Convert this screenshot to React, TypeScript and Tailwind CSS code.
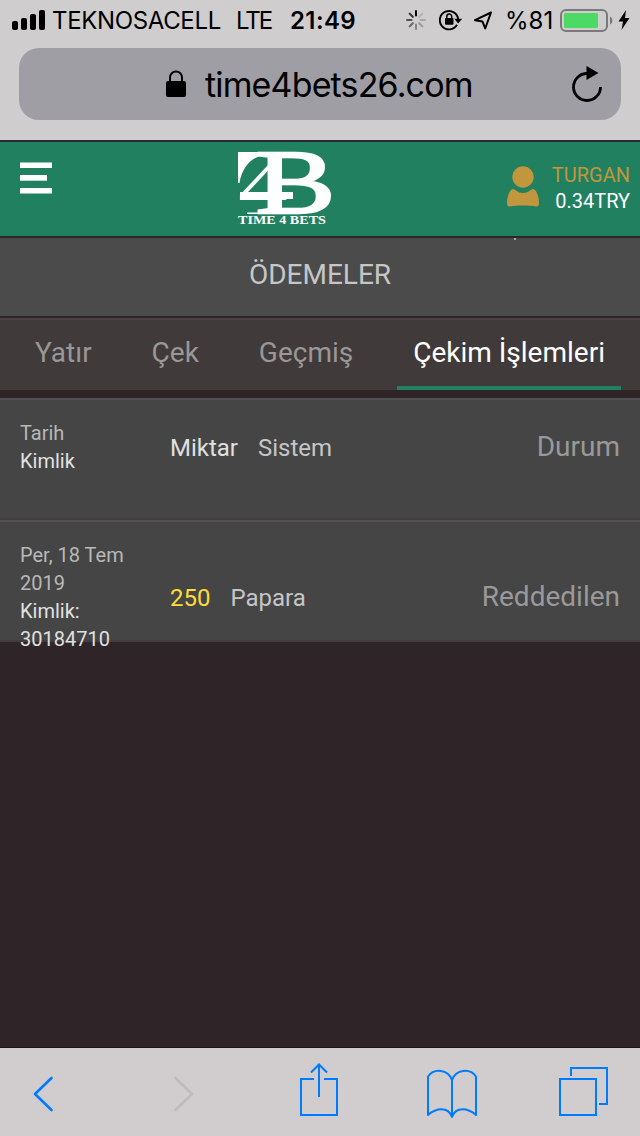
import type { ReactNode } from 'react'
import clsx from 'clsx'

const tabs = [
  { label: 'Yatır', active: false },
  { label: 'Çek', active: false },
  { label: 'Geçmiş', active: false },
  { label: 'Çekim İşlemleri', active: true },
]

const spokes = [1, 0.12, 0.18, 0.25, 0.35, 0.5, 0.6, 0.75]

function SignalIcon() {
  return (
    <svg width="34" height="20" viewBox="0 0 34 20" className="mt-[10px]">
      <rect x="0" y="11" width="6" height="9" rx="2" />
      <rect x="9" y="8" width="6" height="12" rx="2" />
      <rect x="18" y="4" width="6" height="16" rx="2" />
      <rect x="27" y="0" width="6" height="20" rx="2" />
    </svg>
  )
}

function SpinnerIcon() {
  return (
    <svg width="20" height="20" viewBox="0 0 20 20" className="mt-[10px]">
      {spokes.map((opacity, i) => (
        <line
          key={i}
          x1="10"
          y1="5.5"
          x2="10"
          y2="1"
          stroke="black"
          strokeWidth="2"
          strokeLinecap="round"
          opacity={opacity}
          transform={`rotate(${i * 45} 10 10)`}
        />
      ))}
    </svg>
  )
}

function RotationLockIcon() {
  return (
    <svg width="24" height="22" viewBox="0 0 24 22" className="mt-[9px]">
      <path d="M18 15.800A9.200 9.200 0 1 1 19.200 10.500" fill="none" stroke="black" strokeWidth="1.900" />
      <path d="M15.200 9.800h8l-4 4.700z" />
      <rect x="6" y="9" width="8.500" height="6.700" rx="1" />
      <path d="M7.800 10V7.400a2.450 2.450 0 0 1 4.900 0V10" fill="none" stroke="black" strokeWidth="1.500" />
    </svg>
  )
}

function LocationIcon() {
  return (
    <svg width="20" height="20" viewBox="0 0 20 20" className="mt-[11px]">
      <path d="M18 1.500 12.200 17.500 9.500 10.600 2 9.200z" fill="none" stroke="black" strokeWidth="2" strokeLinejoin="round" />
    </svg>
  )
}

function BatteryIcon() {
  return (
    <svg width="54" height="24" viewBox="0 0 54 24" className="mt-[8px]">
      <rect x="1" y="2" width="46" height="21" rx="5" fill="none" stroke="#7b797a" strokeWidth="2" />
      <rect x="4" y="5" width="34" height="15" rx="1.5" fill="#4cd964" />
      <path d="M50 8.500c3.200 1.200 3.200 6.800 0 8z" fill="#7b797a" />
    </svg>
  )
}

function LogoMark() {
  return (
    <svg width="94" height="76" viewBox="0 0 94 76" fill="white" className="mt-2 overflow-visible font-['Liberation_Serif',serif]">
      <path d="M2 2H46V3.500C22 1 7 12 3.500 33H2z" />
      <text transform="scale(1.31 1)">
        <tspan x="1.500" y="61" fontSize="76">4</tspan>
        <tspan x="15" y="63" fontSize="91" stroke="white" strokeWidth="2.400">B</tspan>
      </text>
      <rect x="32" y="2" width="13" height="62" />
      <rect x="4" y="42" width="53" height="7" />
      <rect x="11" y="62.500" width="45" height="1.500" />
      <text x="2" y="74" fontSize="12" fontWeight="700" textLength="88" lengthAdjust="spacingAndGlyphs">TIME 4 BETS</text>
    </svg>
  )
}

function StatusBar() {
  return (
    <div className="flex h-10 items-start pl-3 text-2xl leading-[42px] text-black">
      <SignalIcon />
      <span className="ml-1.5 w-[184px] tracking-[-0.35px]">TEKNOSACELL</span>
      <span className="w-[54px] tracking-[-2px]">LTE</span>
      <span className="w-[116px] font-semibold tracking-[0.4px]">21:49</span>
      <SpinnerIcon />
      <span className="w-[13px]" />
      <RotationLockIcon />
      <span className="w-2.5" />
      <LocationIcon />
      <span className="ml-3 w-[55px]">%81</span>
      <BatteryIcon />
      <svg width="12" height="20" viewBox="0 0 12 20" className="mt-[10px] ml-1">
        <path d="M8 0 .5 11.500H5L3.500 20 11.500 8H7z" />
      </svg>
    </div>
  )
}

function AddressBar() {
  return (
    <div className="mx-[19px] mt-2 flex h-[72px] items-center rounded-[20px] bg-[#9f9ea4] pl-[147px] text-black">
      <svg width="20" height="28" viewBox="0 0 20 28">
        <rect y="11" width="20" height="16" rx="2" />
        <path d="M4 12V7.500a6 6 0 0 1 12 0V12" fill="none" stroke="black" strokeWidth="2" />
      </svg>
      <span className="ml-[19px] w-[366px] text-[34px] tracking-[-0.85px]">time4bets26.com</span>
      <svg width="32" height="36" viewBox="0 0 32 36">
        <path d="M16 7.500A13.500 13.500 0 1 0 29.500 21" fill="none" stroke="black" strokeWidth="2.800" />
        <path d="M15.500 0 27.500 7 15.500 14z" />
      </svg>
    </div>
  )
}

function SiteHeader() {
  return (
    <header className="flex h-[98px] items-start border-y-2 border-t-[#2b2a33] border-b-[#2f2528] bg-[#218060]">
      <svg width="32" height="32" viewBox="0 0 32 32" fill="white" className="mt-5 ml-5">
        <rect y="0.500" width="32" height="5.500" />
        <rect y="13" width="27" height="5.700" />
        <rect y="26" width="32" height="5.500" />
      </svg>
      <div className="ml-[184px]">
        <LogoMark />
      </div>
      <svg width="32" height="42" viewBox="0 0 32 42" fill="#c1963d" className="mt-6 ml-[177px]">
        <circle cx="16" cy="11" r="10.700" />
        <path d="M6 23c2 0 4.500 4 10 4s8-4 10-4c3 0 6 7 6 14 0 2-.8 3.500-2.500 3.500-8-1.200-19-1.200-27 0C.8 40.500 0 39 0 37 0 30 3 23 6 23z" />
      </svg>
      <div className="ml-auto pt-5 pr-[10px] text-right text-xl leading-[26px]">
        <div className="text-[#c1963d]">TURGAN</div>
        <div className="text-white">0.34TRY</div>
      </div>
    </header>
  )
}

function Row({ children }: { children: ReactNode }) {
  return (
    <div className="flex h-[122px] border-y-2 border-t-[#525252] border-b-[#433d3e] bg-[#454545] px-5">
      {children}
    </div>
  )
}

function Toolbar() {
  return (
    <footer className="flex h-[89px] items-start border-t border-[#1f181a] bg-[#d1cdce]">
      <svg width="22" height="36" viewBox="0 0 22 36" fill="none" stroke="#007aff" strokeWidth="2.600" strokeLinecap="round" strokeLinejoin="round" className="mt-7 ml-8">
        <path d="M19.500 2 3 18 19.500 34" />
      </svg>
      <svg width="22" height="36" viewBox="0 0 22 36" fill="none" stroke="#bebbbc" strokeWidth="2.600" strokeLinecap="round" strokeLinejoin="round" className="mt-7 ml-[119px]">
        <path d="M2.500 2 19 18 2.500 34" />
      </svg>
      <svg width="40" height="54" viewBox="0 0 40 54" fill="none" stroke="#007aff" strokeWidth="2" className="mt-[15px] ml-[104px]">
        <path d="M15 16H2V52H38V16H25M20 34V2M12 9.500 20 1.500 28 9.500" />
      </svg>
      <svg width="52" height="50" viewBox="0 0 52 50" fill="none" stroke="#007aff" strokeWidth="2" strokeLinejoin="round" className="mt-[21px] ml-[87px]">
        <path d="M26 11C22 0 8-1 2 7.500V46C10 39 22 37 26 48C30 37 42 39 50 46V7.500C44-1 30 0 26 11V48" />
      </svg>
      <svg width="52" height="52" viewBox="0 0 52 52" fill="none" stroke="#007aff" strokeWidth="2" className="mt-[18px] ml-20">
        <path d="M2 13H38V49H2zM13 10V2H49V38H41" />
      </svg>
    </footer>
  )
}

export default function App() {
  return (
    <div className="flex h-[1136px] w-[640px] flex-col overflow-hidden bg-[#2f2528] font-['Roboto',sans-serif]">
      <div className="h-[140px] shrink-0 bg-[#cfcdce] font-['Inter',sans-serif]">
        <StatusBar />
        <AddressBar />
      </div>

      <SiteHeader />

      <div className="relative h-[78px] bg-[#4b4b4b] text-center text-[28px] leading-[74px] text-[#c6c6c6]">
        ÖDEMELER
        <span className="absolute top-0 left-[514px] h-0.5 w-0.5 bg-[#aaaaaa]" />
      </div>

      {/* Payment tabs */}
      <nav className="mt-0.5 flex h-[72px] justify-between border-t-2 border-[#4b4447] bg-[#403b3a] px-[19px] text-[28px] leading-[66px]">
        {tabs.map((tab) => (
          <div
            key={tab.label}
            className={clsx('px-4', tab.active ? 'border-b-4 border-[#218060] text-white' : 'text-[#999797]')}
          >
            {tab.label}
          </div>
        ))}
      </nav>

      <main className="mt-2 flex-1">
        <Row>
          <div className="w-[150px] pt-[19px] text-xl leading-7">
            <div className="text-[#b8b8b8]">Tarih</div>
            <div className="text-[#e0e0e0]">Kimlik</div>
          </div>
          <span className="pt-8 text-2xl text-[#e0e0e0]">Miktar</span>
          <span className="ml-5 pt-8 text-2xl text-[#c6c6c6]">Sistem</span>
          <span className="ml-auto pt-[27px] text-[28px] leading-10 text-[#999999]">Durum</span>
        </Row>
        <Row>
          <div className="w-[150px] pt-[19px] text-xl leading-7">
            <div className="w-28 text-[#b8b8b8]">Per, 18 Tem 2019</div>
            <div className="w-28 text-[#e0e0e0]">Kimlik: 30184710</div>
          </div>
          <span className="pt-[60px] text-2xl text-[#fddb3a]">250</span>
          <span className="ml-5 pt-[60px] text-2xl text-[#c6c6c6]">Papara</span>
          <span className="ml-auto pt-[55px] text-[28px] leading-10 text-[#999999]">Reddedilen</span>
        </Row>
      </main>

      <Toolbar />
    </div>
  )
}
